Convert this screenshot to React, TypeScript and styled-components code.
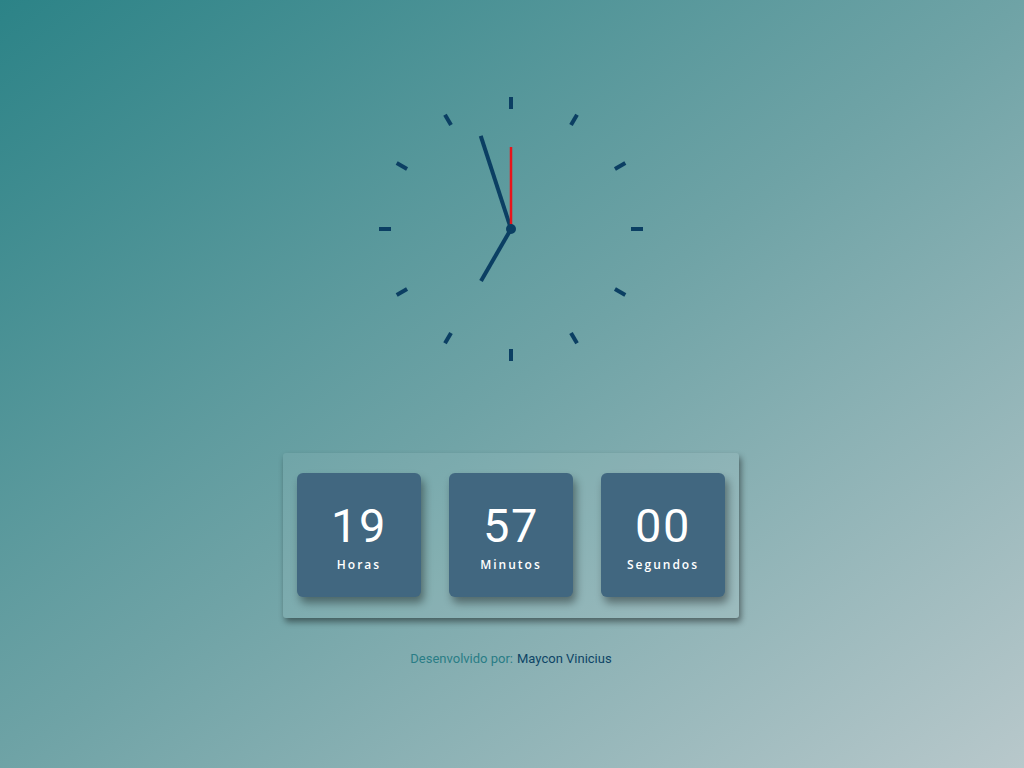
import React from "react";
import styled, { createGlobalStyle } from "styled-components";

const Global = createGlobalStyle`
  html, body { margin: 0; padding: 0; height: 100%; }
  body {
    background: linear-gradient(to bottom right, #2c8387 0%, #6fa3a6 50%, #b8c8cb 100%);
    font-family: "Open Sans", "Liberation Sans", sans-serif;
    min-height: 768px;
  }
`;

const Page = styled.main`
  display: flex;
  flex-direction: column;
  align-items: center;
  padding: 79px 2px 0 0;
`;

const ClockFace = styled.svg`
  display: block;
  width: 300px;
  height: 300px;
`;

const Panel = styled.section`
  margin-top: 74px;
  display: flex;
  gap: 28px;
  padding: 20px 14px 21px 14px;
  background: rgba(255, 255, 255, 0.07);
  border-radius: 3px;
  box-shadow: 2px 4px 6px rgba(0, 0, 0, 0.45);
`;

const Card = styled.div`
  width: 124px;
  height: 124px;
  background: #416780;
  border-radius: 6px;
  box-shadow: 3px 6px 8px rgba(0, 0, 0, 0.4);
  display: flex;
  flex-direction: column;
  align-items: center;
  justify-content: center;
  color: #fff;
`;

const Digits = styled.span`
  font-family: Roboto, "Open Sans", sans-serif;
  font-size: 47px;
  line-height: 48px;
  font-weight: 400;
  letter-spacing: 1.5px;
  margin-top: 4px;
`;

const Label = styled.span`
  font-size: 12px;
  font-weight: 600;
  letter-spacing: 2px;
  margin-top: 6px;
`;

const Footer = styled.p`
  margin: 33px 0 0 0;
  font-family: Roboto, "Open Sans", sans-serif;
  font-size: 13px;
  font-weight: 400;
  color: #2a7d86;
`;

const Author = styled.span`
  color: #0e4566;
  margin-left: 4px;
`;

const CX = 150;
const CY = 150;
const INK = "#0b3f63";

function polar(angle: number, r: number) {
  const rad = (angle * Math.PI) / 180;
  return { x: CX + r * Math.sin(rad), y: CY - r * Math.cos(rad) };
}

function Hand({ angle, length, width, color }: { angle: number; length: number; width: number; color: string }) {
  const end = polar(angle, length);
  return <line x1={CX} y1={CY} x2={end.x} y2={end.y} stroke={color} strokeWidth={width} />;
}

function Clock({ h, m, s }: { h: number; m: number; s: number }) {
  const ticks = Array.from({ length: 12 }, (_, i) => i * 30);
  return (
    <ClockFace viewBox="0 0 300 300">
      {ticks.map((a) => {
        const p1 = polar(a, 120);
        const p2 = polar(a, 132);
        return <line key={a} x1={p1.x} y1={p1.y} x2={p2.x} y2={p2.y} stroke={INK} strokeWidth={4} />;
      })}
      <Hand angle={(h % 12) * 30} length={60} width={4} color={INK} />
      <Hand angle={m * 6} length={98} width={4} color={INK} />
      <Hand angle={s * 6} length={82} width={2.5} color="#e8141b" />
      <circle cx={CX} cy={CY} r={5} fill={INK} />
    </ClockFace>
  );
}

export default function App() {
  const units = [
    { value: "19", label: "Horas" },
    { value: "57", label: "Minutos" },
    { value: "00", label: "Segundos" },
  ];
  return (
    <>
      <Global />
      <Page>
        <Clock h={19} m={57} s={0} />
        <Panel>
          {units.map((u) => (
            <Card key={u.label}>
              <Digits>{u.value}</Digits>
              <Label>{u.label}</Label>
            </Card>
          ))}
        </Panel>
        <Footer>
          Desenvolvido por:<Author>Maycon Vinicius</Author>
        </Footer>
      </Page>
    </>
  );
}
